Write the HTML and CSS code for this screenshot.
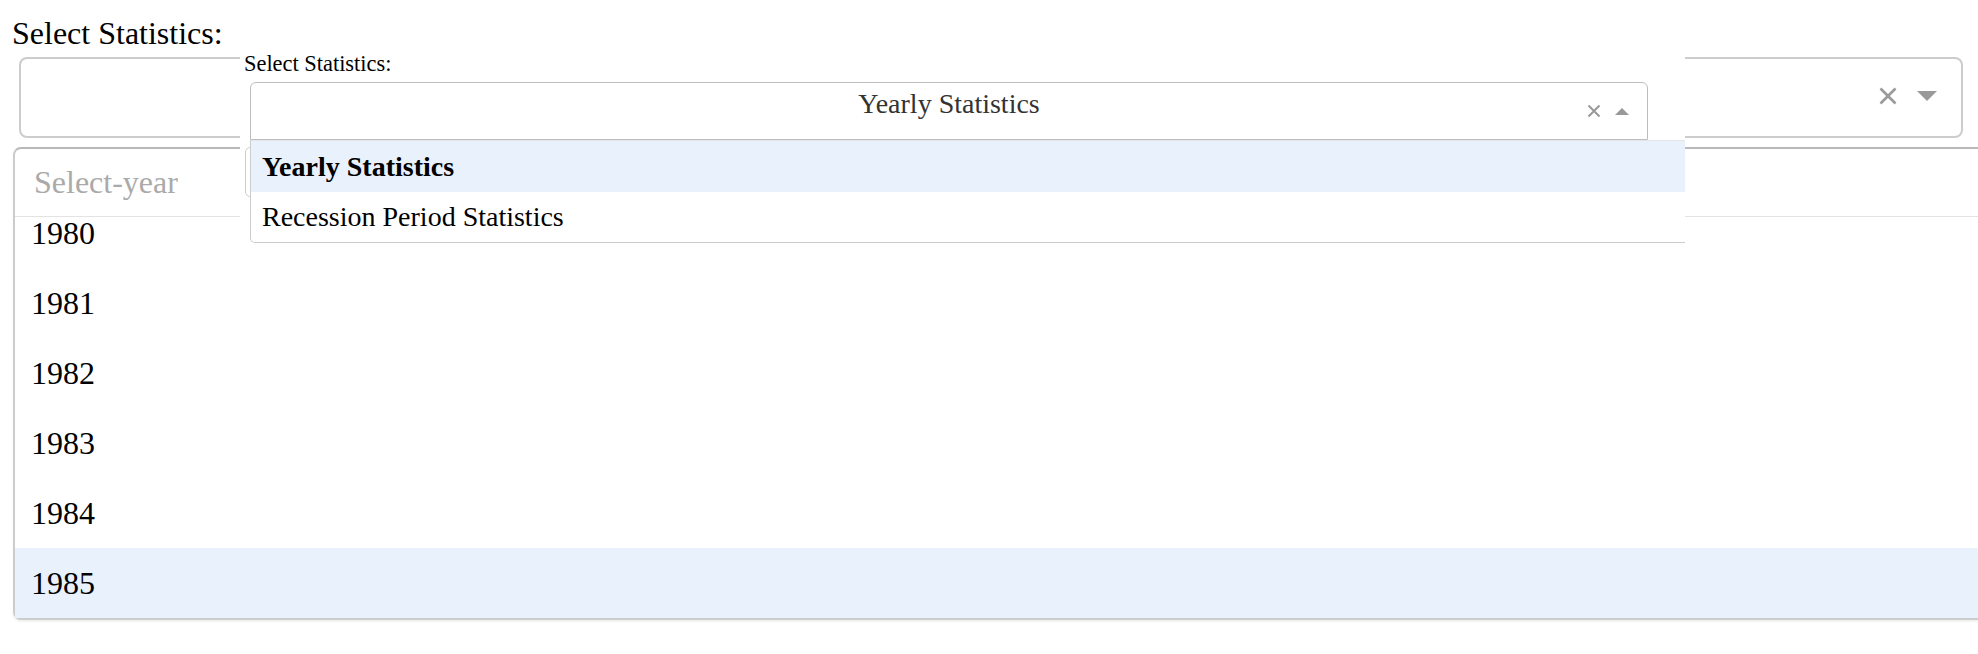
FILE: index.html
```html
<!DOCTYPE html>
<html>
<head>
<meta charset="utf-8">
<title>Select Statistics</title>
<link rel="stylesheet" href="styles.css">
</head>
<body>
<div class="page">
  <div class="big-label">Select Statistics:</div>
  <div class="big-box">
    <svg class="big-x" width="18" height="18" viewBox="0 0 18 18"><path d="M1.5 1.5 L16.5 16.5 M16.5 1.5 L1.5 16.5" stroke="#999" stroke-width="2.6" fill="none"/></svg>
    <svg class="big-arrow" width="20" height="10" viewBox="0 0 20 10"><polygon points="0,0 20,0 10,10" fill="#999"/></svg>
  </div>
  <div class="big-menu">
    <div class="big-search">Select-year</div>
    <div class="big-options">
      <div class="big-opt is-partial">1980</div>
      <div class="big-opt">1981</div>
      <div class="big-opt">1982</div>
      <div class="big-opt">1983</div>
      <div class="big-opt">1984</div>
      <div class="big-opt is-focused">1985</div>
    </div>
  </div>
</div>

<div class="overlay">
  <div class="small-label">Select Statistics:</div>
  <div class="small-select">
    <div class="small-control">
      <div class="small-value">Yearly Statistics</div>
      <div class="small-icons">
        <svg width="14" height="14" viewBox="0 0 14 14"><path d="M1.5 1.5 L12.5 12.5 M12.5 1.5 L1.5 12.5" stroke="#999" stroke-width="2" fill="none"/></svg>
        <svg width="14" height="7" viewBox="0 0 14 7"><polygon points="0,7 14,7 7,0" fill="#999"/></svg>
      </div>
    </div>
    <div class="small-menu">
      <div class="small-opt is-selected">Yearly Statistics</div>
      <div class="small-opt">Recession Period Statistics</div>
    </div>
  </div>
  <div class="small-year"></div>
</div>
</body>
</html>
```

FILE: styles.css
```css
html, body {
  margin: 0;
  padding: 0;
  background: #fff;
}
body {
  width: 1978px;
  height: 654px;
  overflow: hidden;
  position: relative;
  font-family: "Liberation Serif", "Times New Roman", serif;
  color: #000;
}

/* ---- large page ---- */
.page {
  padding-top: 13px;
}
.big-label {
  font-size: 32px;
  line-height: 40px;
  margin-left: 12px;
}
.big-box {
  box-sizing: border-box;
  margin: 4px 0 0 19px;
  width: 1944px;
  height: 81px;
  border: 2px solid #cccccc;
  border-radius: 8px;
  display: flex;
  align-items: center;
  justify-content: flex-end;
  gap: 20px;
  padding: 0 24px 3px 0;
}
.big-x, .big-arrow {
  display: block;
}
.big-menu {
  box-sizing: border-box;
  margin: 9px 0 0 13px;
  width: 2000px;
  border: 2px solid #cccccc;
  border-top-color: #b9b9b9;
  border-radius: 8px;
  box-shadow: 0 2px 2px rgba(0, 0, 0, 0.06);
  background: #fff;
}
.big-search {
  height: 67px;
  line-height: 67px;
  font-size: 32px;
  color: #aaaaaa;
  padding-left: 19px;
  border-bottom: 1px solid #e3e3e3;
}
.big-options {
  height: 401px;
}
.big-opt {
  height: 70px;
  line-height: 70px;
  font-size: 32px;
  padding-left: 16px;
}
.big-opt.is-partial {
  height: 51px;
  line-height: 32px;
}
.big-opt.is-focused {
  background: #e9f1fd;
}

/* ---- overlaid smaller page ---- */
.overlay {
  position: absolute;
  left: 240px;
  top: 40px;
  width: 1445px;
  height: 215px;
  background: #fff;
  overflow: hidden;
}
.small-label {
  margin: 10px 0 0 4px;
  font-size: 22.4px;
  line-height: 28px;
}
.small-select {
  position: relative;
  z-index: 2;
  margin: 4px 0 0 10px;
  width: 1398px;
}
.small-control {
  box-sizing: border-box;
  height: 58px;
  border: 1px solid #bdbdbd;
  border-radius: 6px 6px 0 0;
  display: grid;
  align-items: center;
  background: #fff;
}
.small-value {
  grid-area: 1 / 1;
  align-self: start;
  text-align: center;
  font-size: 28px;
  line-height: 42px;
  color: #333;
}
.small-icons {
  grid-area: 1 / 1;
  justify-self: end;
  display: flex;
  align-items: center;
  gap: 14px;
  padding-right: 18px;
}
.small-icons svg {
  display: block;
}
.small-menu {
  position: absolute;
  top: 100%;
  left: 0;
  width: 1500px;
  box-sizing: border-box;
  background: #fff;
  border: 1px solid #cccccc;
  border-top: 1px solid #e6e6e6;
  border-radius: 0 0 5px 5px;
}
.small-opt {
  height: 50px;
  line-height: 50px;
  font-size: 28px;
  padding-left: 11px;
  color: #000;
}
.small-opt.is-selected {
  height: 51px;
  line-height: 51px;
  font-weight: bold;
  background: #e9f1fd;
}
.small-year {
  box-sizing: border-box;
  margin: 7px 0 0 5px;
  width: 1400px;
  height: 50px;
  border: 1px solid #cccccc;
  border-radius: 5px;
}
```
